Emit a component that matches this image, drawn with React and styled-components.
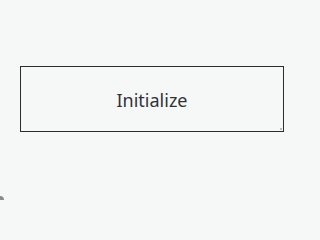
import React from "react";
import styled, { createGlobalStyle } from "styled-components";

const Global = createGlobalStyle`
  html, body {
    margin: 0;
    padding: 0;
    background: #f6f7f7;
  }
  body {
    font-family: "Noto Sans", "Open Sans", sans-serif;
  }
`;

const Page = styled.div`
  position: relative;
  width: 300px;
  height: 200px;
  box-sizing: border-box;
  padding: 66px 16px 0 20px;
  background: #f6f7f7;
  overflow: hidden;
`;

const Panel = styled.div`
  position: relative;
  box-sizing: border-box;
  width: 264px;
  height: 66px;
  border: 1px solid #2a2c31;
  display: flex;
  align-items: center;
  justify-content: center;
`;

const Grip = styled.span`
  position: absolute;
  right: 1px;
  bottom: 1px;
  width: 2px;
  height: 2px;
  background: #b9bbbe;
`;

const Label = styled.span`
  font-family: "Noto Sans", "Open Sans", sans-serif;
  font-size: 18px;
  color: #313338;
  line-height: 1;
  padding-top: 2px;
`;

const Corner = styled.div`
  position: absolute;
  left: -4px;
  bottom: -4px;
  width: 8px;
  height: 8px;
  border-radius: 50%;
  background: #8a8c90;
`;

export default function App() {
  return (
    <>
      <Global />
      <Page>
        <Panel>
          <Label>Initialize</Label>
          <Grip />
        </Panel>
        <Corner />
      </Page>
    </>
  );
}
